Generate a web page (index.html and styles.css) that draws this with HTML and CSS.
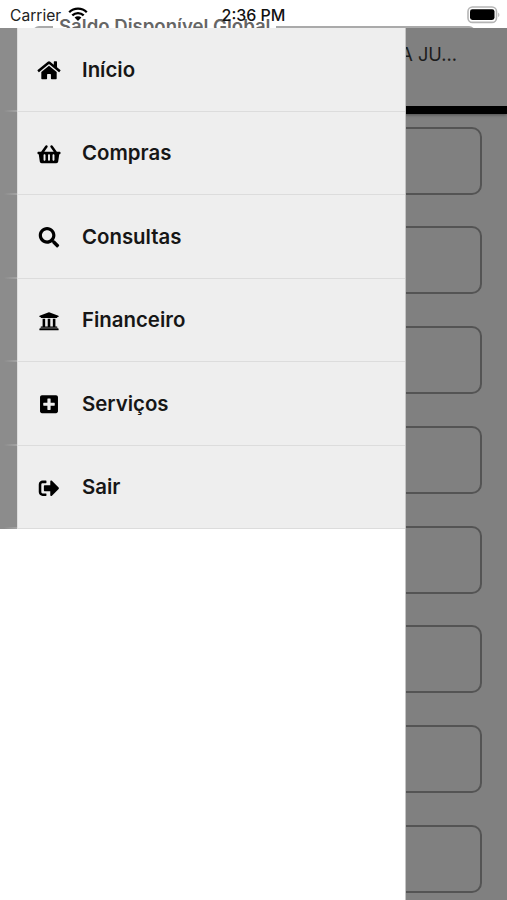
FILE: index.html
```html
<!DOCTYPE html>
<html lang="pt-BR">
<head>
  <meta charset="UTF-8" />
  <meta name="viewport" content="width=device-width, initial-scale=1" />
  <title>Menu</title>
  <link rel="stylesheet" href="styles.css">
</head>
<body>
  <header class="status-bar">
    <div class="saldo"><span class="saldo-titulo">Saldo Disponível Global</span></div>
    <span class="carrier">Carrier</span>
    <svg class="wifi" viewBox="0 0 20 15">
      <path d="M1.2 5.2a12.6 12.6 0 0 1 17.6 0M4.3 8.4a8.2 8.2 0 0 1 11.4 0" fill="none" stroke="#000" stroke-width="2.3"/>
      <path d="M6.6 10.6a4.8 4.8 0 0 1 6.8 0L10 14z"/>
    </svg>
    <span class="hora">2:36 PM</span>
    <svg class="bateria" viewBox="0 0 33 18">
      <rect x="1" y="1" width="28.5" height="15.4" rx="4.5" fill="none" stroke="#b5b5b5" stroke-width="1.6"/>
      <rect x="3" y="3.2" width="24.5" height="10.8" rx="2.4"/>
      <path d="M31.2 6.4c1.6.8 1.6 3.8 0 4.6z" fill="#b5b5b5"/>
    </svg>
  </header>

  <main class="pagina">
    <div class="topo"><span class="cliente">MARIA JU...</span></div>
    <div class="cartoes">
      <div class="cartao"></div>
      <div class="cartao"></div>
      <div class="cartao"></div>
      <div class="cartao"></div>
      <div class="cartao"></div>
      <div class="cartao"></div>
      <div class="cartao"></div>
      <div class="cartao"></div>
    </div>
  </main>

  <nav class="menu">
    <ul>
      <li>
        <a class="item">
          <svg viewBox="0 0 576 512"><path d="M280.37 148.26L96 300.11V464a16 16 0 0 0 16 16l112.06-.29a16 16 0 0 0 15.92-16V368a16 16 0 0 1 16-16h64a16 16 0 0 1 16 16v95.64a16 16 0 0 0 16 16.05L464 480a16 16 0 0 0 16-16V300L295.67 148.26a12.19 12.19 0 0 0-15.3 0zM571.6 251.47L488 182.56V44.05a12 12 0 0 0-12-12h-56a12 12 0 0 0-12 12v72.61L318.47 43a48 48 0 0 0-61 0L4.34 251.47a12 12 0 0 0-1.6 16.9l25.5 31A12 12 0 0 0 45.15 301l235.22-193.74a12.19 12.19 0 0 1 15.3 0L530.9 301a12 12 0 0 0 16.9-1.6l25.5-31a12 12 0 0 0-1.7-16.93z"/></svg>
          <span>Início</span>
        </a>
      </li>
      <li>
        <a class="item">
          <svg viewBox="0 0 576 512"><path d="M576 216v16c0 13.255-10.745 24-24 24h-8l-26.113 182.788C514.509 462.435 494.257 480 470.37 480H105.63c-23.887 0-44.139-17.565-47.518-41.212L32 256h-8c-13.255 0-24-10.745-24-24v-16c0-13.255 10.745-24 24-24h67.341l106.78-146.821c10.395-14.292 30.407-17.453 44.701-7.058 14.293 10.395 17.453 30.408 7.058 44.701L170.477 192h235.046L326.12 82.821c-10.395-14.292-7.234-34.306 7.059-44.701 14.291-10.395 34.306-7.235 44.701 7.058L484.659 192H552c13.255 0 24 10.745 24 24zM312 392V280c0-13.255-10.745-24-24-24s-24 10.745-24 24v112c0 13.255 10.745 24 24 24s24-10.745 24-24zm112 0V280c0-13.255-10.745-24-24-24s-24 10.745-24 24v112c0 13.255 10.745 24 24 24s24-10.745 24-24zm-224 0V280c0-13.255-10.745-24-24-24s-24 10.745-24 24v112c0 13.255 10.745 24 24 24s24-10.745 24-24z"/></svg>
          <span>Compras</span>
        </a>
      </li>
      <li>
        <a class="item">
          <svg viewBox="0 0 512 512"><path d="M505 442.7L405.3 343c-4.5-4.5-10.6-7-17-7H372c27.6-35.3 44-79.7 44-128C416 93.1 322.9 0 208 0S0 93.1 0 208s93.1 208 208 208c48.3 0 92.7-16.4 128-44v16.3c0 6.4 2.5 12.5 7 17l99.7 99.7c9.4 9.4 24.6 9.4 33.9 0l28.3-28.3c9.4-9.4 9.4-24.6.1-34zM208 336c-70.7 0-128-57.2-128-128 0-70.7 57.2-128 128-128 70.7 0 128 57.2 128 128 0 70.7-57.2 128-128 128z"/></svg>
          <span>Consultas</span>
        </a>
      </li>
      <li>
        <a class="item">
          <svg viewBox="0 0 512 512"><path d="M496 128v16a8 8 0 0 1-8 8h-24v12c0 6.627-5.373 12-12 12H60c-6.627 0-12-5.373-12-12v-12H24a8 8 0 0 1-8-8v-16a8 8 0 0 1 4.941-7.392l232-88a7.996 7.996 0 0 1 6.118 0l232 88A8 8 0 0 1 496 128zm-24 304H40c-13.255 0-24 10.745-24 24v16a8 8 0 0 0 8 8h464a8 8 0 0 0 8-8v-16c0-13.255-10.745-24-24-24zM96 192v192H60c-6.627 0-12 5.373-12 12v20h416v-20c0-6.627-5.373-12-12-12h-36V192h-64v192h-64V192h-64v192h-64V192H96z"/></svg>
          <span>Financeiro</span>
        </a>
      </li>
      <li>
        <a class="item">
          <svg viewBox="0 0 448 512"><path d="M400 32H48C21.5 32 0 53.5 0 80v352c0 26.5 21.5 48 48 48h352c26.5 0 48-21.5 48-48V80c0-26.5-21.5-48-48-48zm-32 252c0 6.6-5.4 12-12 12h-92v92c0 6.6-5.4 12-12 12h-56c-6.6 0-12-5.4-12-12v-92H92c-6.6 0-12-5.4-12-12v-56c0-6.6 5.4-12 12-12h92v-92c0-6.6 5.4-12 12-12h56c6.6 0 12 5.4 12 12v92h92c6.6 0 12 5.4 12 12v56z"/></svg>
          <span>Serviços</span>
        </a>
      </li>
      <li>
        <a class="item">
          <svg viewBox="0 0 512 512"><path d="M497 273L329 441c-15 15-41 4.5-41-17v-96H152c-13.3 0-24-10.7-24-24v-96c0-13.3 10.7-24 24-24h136V88c0-21.4 25.9-32 41-17l168 168c9.3 9.4 9.3 24.6 0 34zM192 436v-40c0-6.6-5.4-12-12-12H96c-17.7 0-32-14.3-32-32V160c0-17.7 14.3-32 32-32h84c6.6 0 12-5.4 12-12V76c0-6.6-5.4-12-12-12H96c-53 0-96 43-96 96v192c0 53 43 96 96 96h84c6.6 0 12-5.4 12-12z"/></svg>
          <span>Sair</span>
        </a>
      </li>
    </ul>
  </nav>
</body>
</html>
```
FILE: styles.css
```css
* {
  box-sizing: border-box;
}
body {
  margin: 0;
  height: 900px;
  position: relative;
  overflow: hidden;
  background: #808080;
  font-family: Inter, "Liberation Sans", sans-serif;
  color: #111;
}
/* barra de status */
.status-bar {
  display: flex;
  align-items: center;
  height: 28px;
  padding: 2px 7px 0 10px;
  background: #fff;
  position: relative;
  z-index: 0;
  overflow: hidden;
}
.carrier {
  font-size: 15.6px;
  width: 52px;
  margin-right: 6px;
  color: #222;
  white-space: nowrap;
}
.wifi {
  width: 20px;
  height: 15px;
  margin-top: -2px;
}
.hora {
  position: absolute;
  left: 0;
  right: 0;
  top: 5px;
  text-align: center;
  font-size: 16px;
  font-weight: 500;
  line-height: 20px;
}
.bateria {
  width: 33px;
  height: 18px;
  margin-left: auto;
  margin-top: -1px;
}
/* caixa de saldo que passa por trás da barra */
.saldo {
  position: absolute;
  z-index: -1;
  top: 26px;
  left: 33px;
  right: 32px;
  height: 40px;
  border-top: 2px solid #aaa;
  border-radius: 6px;
}
.saldo-titulo {
  position: absolute;
  top: -14px;
  left: 20px;
  padding: 0 6px;
  background: #fff;
  font-size: 18.6px;
  font-weight: 600;
  line-height: 24px;
  color: #666;
  white-space: nowrap;
}
/* página escurecida */
.topo {
  height: 86px;
  padding: 14px 50px 0 0;
  border-bottom: 8px solid #000;
  box-shadow: 0 1px 3px rgba(0, 0, 0, 0.4);
  text-align: right;
}
.cliente {
  font-size: 18.2px;
  line-height: 24px;
  color: #1c1c1c;
}
.cartoes {
  display: flex;
  flex-direction: column;
  gap: 31.8px;
  padding: 12.5px 25px 0;
}
.cartao {
  height: 68px;
  border: 2px solid #545454;
  border-radius: 10px;
}
/* menu lateral */
.menu {
  position: absolute;
  top: 28px;
  left: 0;
  bottom: 0;
  width: 406px;
  background: #fff;
  border-right: 1px solid #c4c4c4;
}
.menu ul {
  list-style: none;
  margin: 0;
  padding: 0;
  background: #8c8c8c;
}
.menu li {
  height: 83.5px;
  padding-left: 17px;
  background: linear-gradient(90deg, transparent 4px, #a3a3a3 17px) bottom / 100% 2px no-repeat;
}
.item {
  display: flex;
  align-items: center;
  gap: 18px;
  height: 100%;
  padding-left: 16px;
  background: #eee;
  border-left: 1px solid #ddd;
  border-bottom: 1.5px solid #dcdcdc;
}
.item svg {
  width: 30px;
  height: 20.5px;
  margin-top: 2px;
  fill: #000;
}
.item span {
  font-size: 20.4px;
  font-weight: 600;
  color: #161616;
}
```
